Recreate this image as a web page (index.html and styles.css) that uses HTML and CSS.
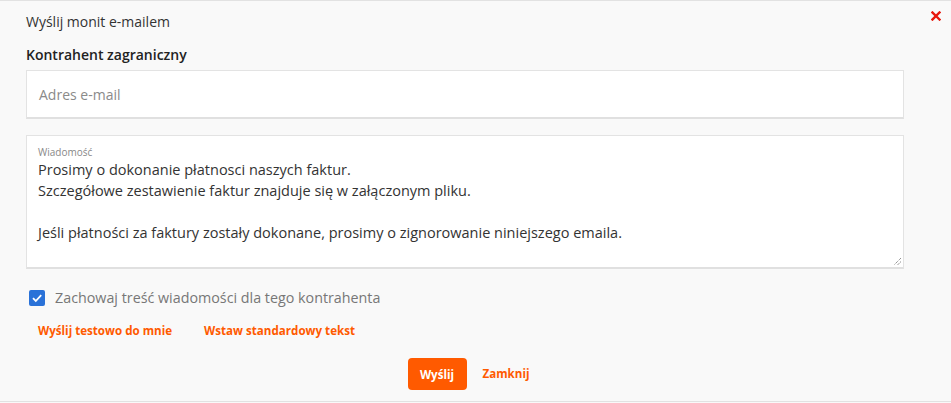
FILE: index.html
```html
<!DOCTYPE html>
<html lang="pl">
<head>
<meta charset="utf-8">
<link rel="stylesheet" href="styles.css">
</head>
<body>
<div class="dialog">
  <button class="close" aria-label="Zamknij">
    <svg width="10" height="10" viewBox="0 0 10 10"><path d="M1.5 1.5 L8.5 8.5 M8.5 1.5 L1.5 8.5" stroke="#e8170c" stroke-width="2.4" stroke-linecap="square"/></svg>
  </button>
  <div class="title">Wyślij monit e-mailem</div>
  <div class="client">Kontrahent zagraniczny</div>
  <div class="field email">Adres e-mail</div>
  <div class="field message">
    <div class="label">Wiadomość</div>
    <div class="text">Prosimy o dokonanie płatnosci naszych faktur.<br>Szczegółowe zestawienie faktur znajduje się w załączonym pliku.<br><br>Jeśli płatności za faktury zostały dokonane, prosimy o zignorowanie niniejszego emaila.</div>
    <svg class="grip" width="10" height="10" viewBox="0 0 10 10"><path d="M9 2 L2 9 M9 5.5 L5.5 9" stroke="#666" stroke-width="1" stroke-dasharray="1 1"/></svg>
  </div>
  <label class="check">
    <span class="box"><svg width="16" height="16" viewBox="0 0 16 16"><path d="M4 8.2 L6.8 11 L12.2 5.2" fill="none" stroke="#fff" stroke-width="1.8"/></svg></span>
    <span>Zachowaj treść wiadomości dla tego kontrahenta</span>
  </label>
  <div class="links">
    <a href="#">Wyślij testowo do mnie</a>
    <a href="#">Wstaw standardowy tekst</a>
  </div>
  <div class="actions">
    <button class="send">Wyślij</button>
    <a href="#" class="cancel">Zamknij</a>
  </div>
</div>
</body>
</html>
```
FILE: styles.css
```css
* { box-sizing: border-box; }
html, body { margin: 0; padding: 0; }
body {
  background: #f9f9f9;
  font-family: "Open Sans", "Liberation Sans", sans-serif;
  color: #333;
}
.dialog {
  position: relative;
  height: 402px;
  border-top: 1px solid #e2e2e2;
  border-bottom: 1px solid #e2e2e2;
  padding: 12px 47px 0 26px;
  display: flex;
  flex-direction: column;
}
.close {
  position: absolute;
  top: 10px;
  right: 10px;
  border: 0;
  background: none;
  padding: 0;
  width: 10px;
  height: 10px;
  display: flex;
}
.title {
  font-size: 14px;
  line-height: 18px;
  color: #333;
}
.client {
  margin-top: 14px;
  font-size: 14px;
  font-weight: 600;
  line-height: 20px;
  color: #222;
}
.field {
  background: #fff;
  border: 1px solid #e3e3e3;
  border-bottom: 2px solid #e0e0e0;
}
.email {
  margin-top: 5px;
  height: 49px;
  padding: 0 12px;
  display: flex;
  align-items: center;
  font-size: 14px;
  color: #8a8a8a;
}
.message {
  position: relative;
  margin-top: 16px;
  height: 134px;
  padding: 10px 11px 0 11px;
}
.label {
  font-size: 10px;
  line-height: 13px;
  color: #888;
}
.text {
  font-size: 14.5px;
  line-height: 21px;
  color: #333;
}
.grip {
  position: absolute;
  right: 1px;
  bottom: 1px;
}
.check {
  margin-top: 19px;
  margin-left: 3px;
  display: flex;
  align-items: center;
  gap: 10px;
  font-size: 14.3px;
  line-height: 20px;
  color: #777;
}
.box {
  width: 16px;
  height: 16px;
  border-radius: 2px;
  background: #2a72d8;
  display: flex;
}
.links {
  margin-top: 15px;
  padding-left: 12px;
  display: flex;
  gap: 32px;
}
.links a, .cancel {
  color: #ff5a00;
  font-size: 11.6px;
  font-weight: 700;
  text-decoration: none;
  line-height: 16px;
}
.actions {
  margin-top: 19px;
  padding-left: 7px;
  display: flex;
  justify-content: center;
  align-items: center;
  gap: 16px;
}
.send {
  height: 32px;
  width: 59px;
  border: 0;
  border-radius: 4px;
  background: #ff5a00;
  color: #fff;
  font-family: inherit;
  font-size: 11.6px;
  font-weight: 700;
  padding: 0;
}
```
